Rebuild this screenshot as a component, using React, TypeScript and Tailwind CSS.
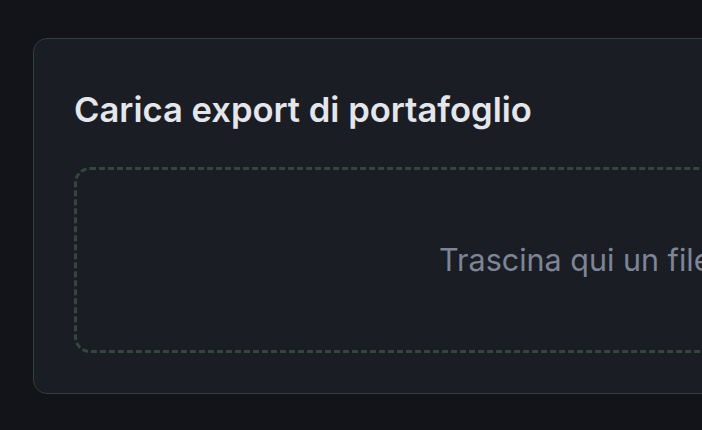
export default function App() {
  return (
    <div className="min-h-screen w-full overflow-hidden bg-[#131419] pl-[33px] pt-[38px] font-['Inter',sans-serif]">
      {/* Carta di caricamento */}
      <div className="w-[1156px] rounded-[14px] border border-[#30403a] bg-[#1b1d25] px-10 pb-10 pt-[46px]">
        <h2 className="mb-[34px] text-[34.6px] font-semibold leading-[48px] text-[#e4e6ec]">
          Carica export di portafoglio
        </h2>
        <div className="flex h-[186px] items-center justify-center rounded-[16px] border-[3px] border-dashed border-[#35473c]">
          <p className="text-[30.5px] text-[#7e8597]">Trascina qui un file CSV</p>
        </div>
      </div>
    </div>
  );
}
